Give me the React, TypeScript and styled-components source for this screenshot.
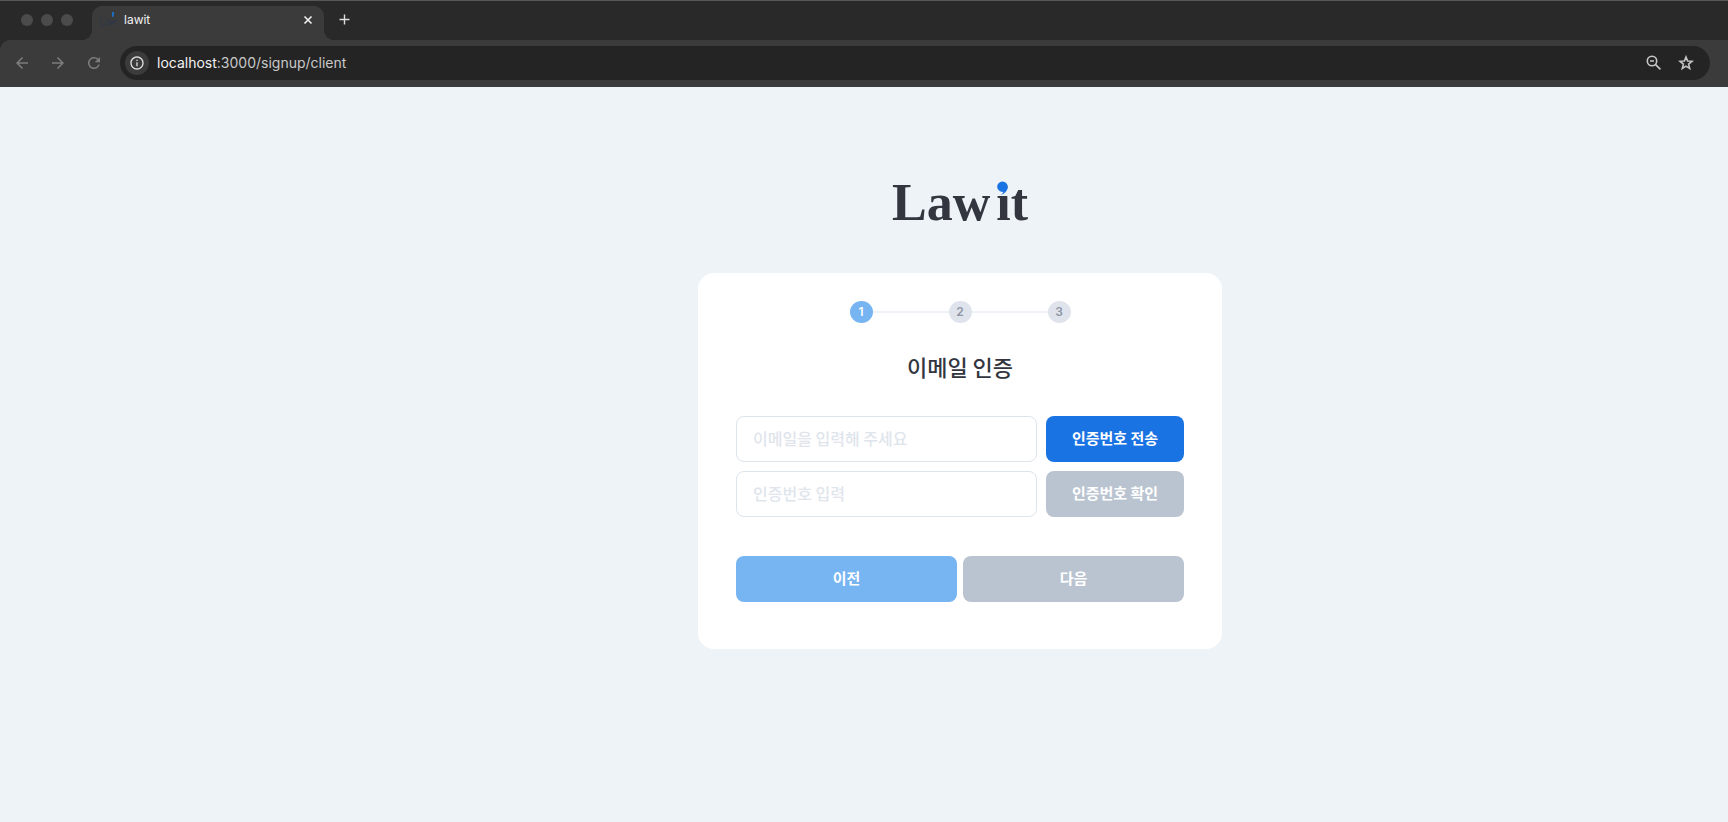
import React from 'react';
import styled, { createGlobalStyle } from 'styled-components';
import { MdAdd, MdArrowBack, MdArrowForward, MdInfoOutline, MdRefresh } from 'react-icons/md';

const GlobalStyle = createGlobalStyle`
  *, *::before, *::after { box-sizing: border-box; }
  body {
    margin: 0;
    background: #eef3f8;
    color: #33363f;
    font-family: 'Noto Sans CJK KR', sans-serif;
  }
  button, input { font-family: inherit; }
  button { border: 0; padding: 0; cursor: pointer; }
`;

const Screen = styled.div`
  display: flex;
  flex-direction: column;
  min-height: 100vh;
`;

const Browser = styled.header`
  background: #292929;
  border-top: 1px solid #565858;
  font-family: Inter, sans-serif;
`;

const TabStrip = styled.div`
  display: flex;
  align-items: center;
  height: 39px;
  padding: 0 0 2px 21px;
`;

const WindowDots = styled.div`
  display: flex;
  gap: 8px;
  margin-right: 19px;
`;

const Dot = styled.span`
  width: 12px;
  height: 12px;
  border-radius: 50%;
  background: #4b4b4b;
`;

const Tab = styled.div`
  position: relative;
  display: flex;
  align-items: center;
  align-self: flex-end;
  gap: 7px;
  width: 232px;
  height: 34px;
  margin-bottom: -2px;
  padding: 0 8px 7px;
  border-radius: 10px 10px 0 0;
  background: #3b3b3b;
  color: #f1f1f1;
  font-size: 12px;
  line-height: 16px;

  &::before, &::after {
    content: '';
    position: absolute;
    bottom: 0;
    width: 10px;
    height: 10px;
  }
  &::before {
    right: 100%;
    background: radial-gradient(circle at 0 0, transparent 10px, #3b3b3b 10px);
  }
  &::after {
    left: 100%;
    background: radial-gradient(circle at 100% 0, transparent 10px, #3b3b3b 10px);
  }
`;

const TabTitle = styled.span`
  flex: 1;
`;

const IconButton = styled.button<{ $size?: number; $tone?: string; $fill?: string }>`
  display: flex;
  flex: none;
  align-items: center;
  justify-content: center;
  width: ${p => p.$size ?? 16}px;
  height: ${p => p.$size ?? 16}px;
  border-radius: 50%;
  background: ${p => p.$fill ?? 'transparent'};
  color: ${p => p.$tone ?? '#dedede'};
`;

const NewTab = styled(IconButton)`
  margin-left: 8px;
`;

const Toolbar = styled.div`
  display: flex;
  align-items: center;
  gap: 12px;
  height: 47px;
  padding: 0 18px 1px 10px;
  border-radius: 10px 0 0 0;
  background: #3b3b3b;
`;

const AddressBar = styled.div`
  display: flex;
  flex: 1;
  align-items: center;
  gap: 8px;
  height: 34px;
  margin-left: 2px;
  padding: 0 12px 0 5px;
  border-radius: 17px;
  background: #242424;
`;

const Address = styled.div`
  flex: 1;
  color: #c9c9c9;
  font-size: 14px;
  line-height: 20px;
`;

const Host = styled.span`
  color: #f2f2f2;
`;

const Main = styled.main`
  display: flex;
  flex: 1;
  flex-direction: column;
  align-items: center;
  padding: 87px 0 40px 192px;
`;

const Logo = styled.h1`
  display: flex;
  gap: 6px;
  margin: 0 0 41px;
  font-family: 'Liberation Serif', serif;
  font-size: 52px;
  font-weight: 700;
  line-height: 58px;
`;

const LogoWord = styled.span`
  position: relative;
`;

const LogoComma = styled.svg`
  position: absolute;
  top: 7px;
  left: 1px;
`;

const Card = styled.form`
  display: flex;
  flex-direction: column;
  width: 524px;
  max-width: 100%;
  padding: 28px 38px 47px;
  border-radius: 16px;
  background: #fff;
`;

const Steps = styled.ol`
  display: flex;
  align-items: center;
  align-self: center;
  margin: 0;
  padding: 0;
  list-style: none;
`;

const Step = styled.li<{ $active?: boolean }>`
  display: flex;
  align-items: center;
  color: ${p => (p.$active ? '#fff' : '#8d96a6')};
  font-family: Inter, sans-serif;
  font-size: 12px;
  font-weight: 600;
  line-height: 22px;

  &:not(:first-child)::before {
    content: '';
    width: 76px;
    height: 2px;
    background: #eff3f8;
  }
`;

const StepNumber = styled.span<{ $active?: boolean }>`
  width: 23px;
  height: 22px;
  border-radius: 50%;
  background: ${p => (p.$active ? '#77b4f2' : '#dfe4ec')};
  text-align: center;
`;

const Title = styled.h2`
  margin: 26px 0 33px;
  font-size: 22px;
  font-weight: 500;
  line-height: 34px;
  text-align: center;
`;

const Fields = styled.div`
  display: grid;
  grid-template-columns: 1fr 138px;
  gap: 9px;
`;

const TextInput = styled.input`
  width: 100%;
  min-width: 0;
  height: 46px;
  padding: 0 16px 2px;
  border: 1px solid #dde4ec;
  border-radius: 8px;
  background: #fff;
  color: #33363f;
  font-size: 16px;

  &::placeholder { color: #dfe5ec; opacity: 1; font-weight: 500; }
`;

const tones = { primary: '#1a73e3', light: '#77b4f2', muted: '#bac4d0' };

const Button = styled.button<{ $tone: keyof typeof tones }>`
  height: 46px;
  padding-bottom: 2px;
  border-radius: 8px;
  background: ${p => tones[p.$tone]};
  color: #fff;
  font-size: 15px;
  font-weight: 700;
  line-height: 22px;
`;

const Actions = styled.div`
  display: grid;
  grid-template-columns: 1fr 1fr;
  gap: 6px;
  margin-top: 39px;
`;

const Favicon = () => (
  <svg width="17" height="17" viewBox="0 0 17 17" aria-hidden="true">
    <path d="M1 4v10h4M6 9h3v5H6zM10 9l1 5 1-4 1 4 1-5M15 7v7" fill="none" stroke="#303846" strokeWidth="1" />
    <path d="M12 1h2v3l-1 2h-1z" fill="#1c6fc4" />
  </svg>
);

const CloseIcon = () => (
  <svg width="10" height="10" viewBox="0 0 10 10" fill="none" stroke="currentColor" strokeWidth="1.6" aria-hidden="true">
    <path d="M1.5 1.5l7 7M8.500 1.500l-7 7" />
  </svg>
);

const ZoomOutIcon = () => (
  <svg width="16" height="16" viewBox="0 0 16 16" fill="none" stroke="currentColor" strokeWidth="1.6" aria-hidden="true">
    <circle cx="6" cy="6" r="4.700" />
    <path d="M9.400 9.400l5 5M4 6h4" />
  </svg>
);

const StarIcon = () => (
  <svg width="16" height="16" viewBox="0 0 16 16" fill="none" stroke="currentColor" strokeWidth="1.6" aria-hidden="true">
    <path d="M8 2l1.600 4 4.400.3-3.400 2.800 1.100 4.300L8 11.100l-3.700 2.300 1.100-4.300L2 6.300 6.400 6z" />
  </svg>
);

export default function App() {
  return (
    <Screen>
      <GlobalStyle />
      <Browser>
        <TabStrip>
          <WindowDots>
            <Dot />
            <Dot />
            <Dot />
          </WindowDots>
          <Tab>
            <Favicon />
            <TabTitle>lawit</TabTitle>
            <IconButton type="button" aria-label="Close tab" $tone="#f1f1f1"><CloseIcon /></IconButton>
          </Tab>
          <NewTab type="button" aria-label="New tab" $size={24}><MdAdd size={17} /></NewTab>
        </TabStrip>
        <Toolbar>
          <IconButton type="button" aria-label="Back" $size={24} $tone="#7d7d7d"><MdArrowBack size={18} /></IconButton>
          <IconButton type="button" aria-label="Forward" $size={24} $tone="#7d7d7d"><MdArrowForward size={18} /></IconButton>
          <IconButton type="button" aria-label="Reload" $size={24} $tone="#7d7d7d"><MdRefresh size={18} /></IconButton>
          <AddressBar>
            <IconButton type="button" aria-label="Site information" $size={24} $fill="#3b3b3b"><MdInfoOutline size={16} /></IconButton>
            <Address><Host>localhost</Host>:3000/signup/client</Address>
            <IconButton type="button" aria-label="Zoom" $size={24} $tone="#c7c7c7"><ZoomOutIcon /></IconButton>
            <IconButton type="button" aria-label="Bookmark" $size={24} $tone="#c7c7c7"><StarIcon /></IconButton>
          </AddressBar>
        </Toolbar>
      </Browser>

      <Main>
        <Logo>
          <LogoWord>Law</LogoWord>
          <LogoWord>
            it
            <LogoComma width="12" height="15" viewBox="0 0 12 15" aria-hidden="true">
              <path d="M5.500 .5a5.200 5.200 0 0 1 5.200 5.200c0 4-3 7.300-7.500 8.300 2-1 3-2 3.200-3.200A5.200 5.200 0 1 1 5.500 .5z" fill="#1a73e3" />
            </LogoComma>
          </LogoWord>
        </Logo>
        <Card onSubmit={e => e.preventDefault()}>
          <Steps>
            <Step $active><StepNumber $active>1</StepNumber></Step>
            <Step><StepNumber>2</StepNumber></Step>
            <Step><StepNumber>3</StepNumber></Step>
          </Steps>
          <Title>이메일 인증</Title>
          <Fields>
            <TextInput type="email" aria-label="이메일" placeholder="이메일을 입력해 주세요" />
            <Button type="button" $tone="primary">인증번호 전송</Button>
            <TextInput type="text" aria-label="인증번호" placeholder="인증번호 입력" />
            <Button type="button" $tone="muted">인증번호 확인</Button>
          </Fields>
          <Actions>
            <Button type="button" $tone="light">이전</Button>
            <Button type="submit" $tone="muted">다음</Button>
          </Actions>
        </Card>
      </Main>
    </Screen>
  );
}
